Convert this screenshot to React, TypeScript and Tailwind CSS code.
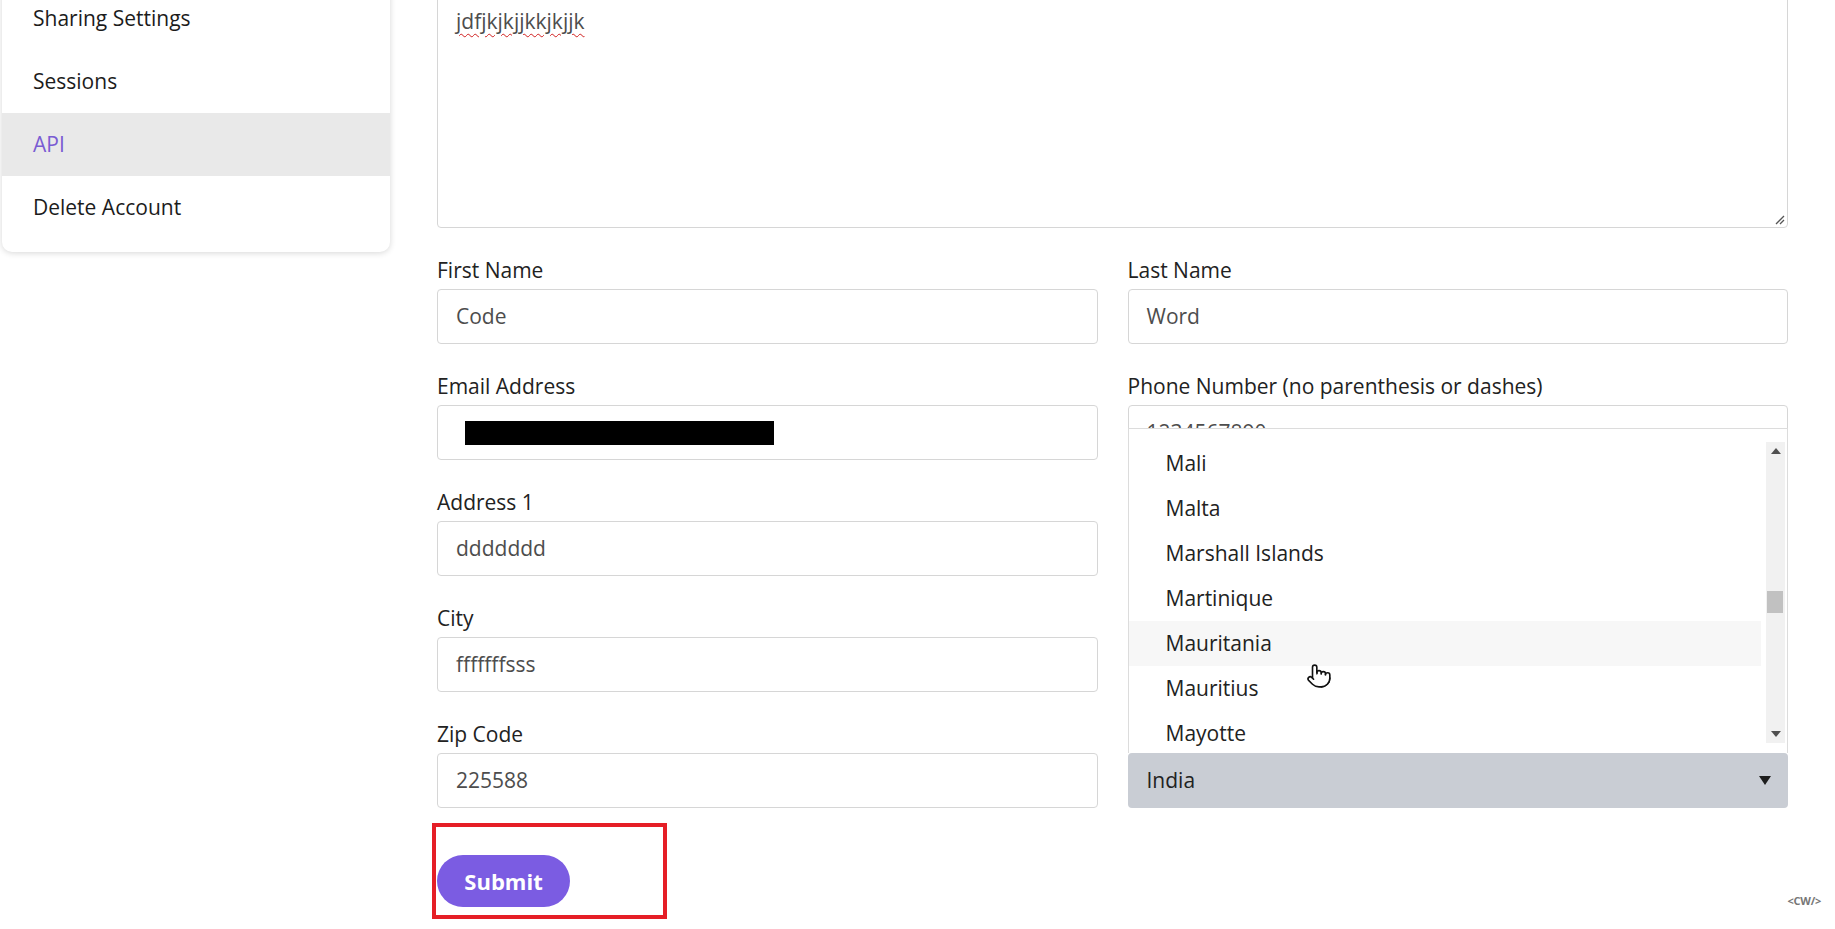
import React from 'react';
import { Pointer } from 'lucide-react';

const font = { fontFamily: '"Open Sans", Lato, sans-serif' };

const SideItem = ({ label, active }: { label: string; active?: boolean }) => (
  <div
    className={
      'h-[63px] flex items-center pl-[31px] text-[21px] ' +
      (active ? 'bg-[#e9e9e9] text-[#7a5cd3]' : 'text-[#1c1c1c]')
    }
  >
    {label}
  </div>
);

const Field = ({ label, children }: { label: string; children: React.ReactNode }) => (
  <div className="flex flex-col">
    <div className="h-[28px] leading-[28px] text-[21px] text-[#222] mb-[5px]">{label}</div>
    {children}
  </div>
);

const Input = ({ value, children }: { value?: string; children?: React.ReactNode }) => (
  <div className="h-[55px] border border-[#d6d6d6] rounded-[4px] bg-white flex items-center pl-[18px] text-[21px] text-[#4d4d4d] overflow-hidden">
    {value}
    {children}
  </div>
);

const countries = ['Mali', 'Malta', 'Marshall Islands', 'Martinique', 'Mauritania', 'Mauritius', 'Mayotte'];

export default function App() {
  return (
    <div className="w-[1835px] h-[929px] bg-white flex overflow-hidden relative" style={font}>
      {/* sidebar */}
      <div className="w-[388px] ml-[2px] shrink-0">
        <div className="-mt-[13px] bg-white rounded-b-[10px] shadow-[0_1px_6px_rgba(0,0,0,0.16)] pb-[13px]">
          <SideItem label="Sharing Settings" />
          <SideItem label="Sessions" />
          <SideItem label="API" active />
          <SideItem label="Delete Account" />
        </div>
      </div>

      {/* main */}
      <div className="ml-[47px] w-[1351px] flex flex-col">
        <div className="-mt-[12px] h-[240px] border border-[#d6d6d6] rounded-[4px] relative pt-[18px] pl-[18px]">
          <span className="text-[21px] leading-[28px] text-[#4d4d4d] underline decoration-wavy decoration-[#d02020] decoration-1 underline-offset-[4px]">
            jdfjkjkjjkkjkjjk
          </span>
          <svg className="absolute right-[2px] bottom-[2px]" width="12" height="12" viewBox="0 0 12 12">
            <path d="M11 3 L3 11 M11 7 L7 11" stroke="#555" strokeWidth="1.3" />
          </svg>
        </div>

        <div className="grid grid-cols-2 gap-x-[30px] gap-y-[28px] mt-[28px]">
          <Field label="First Name">
            <Input value="Code" />
          </Field>
          <Field label="Last Name">
            <Input value="Word" />
          </Field>
          <Field label="Email Address">
            <Input>
              <div className="ml-[9px] w-[309px] h-[24px] bg-black" />
            </Input>
          </Field>
          <Field label="Phone Number (no parenthesis or dashes)">
            <Input value="1234567890" />
          </Field>
          <Field label="Address 1">
            <Input value="ddddddd" />
          </Field>
          <div />
          <Field label="City">
            <Input value="fffffffsss" />
          </Field>
          <div />
          <Field label="Zip Code">
            <Input value="225588" />
          </Field>
          <div className="flex flex-col">
            <div className="h-[28px] mb-[5px]" />
            <div className="relative h-[55px]">
              {/* open list */}
              <div className="absolute left-0 right-0 bottom-full h-[325px] bg-white border border-[#dcdcdc] border-b-0 overflow-hidden pt-[12px]">
                {countries.map((c) => (
                  <div
                    key={c}
                    className={
                      'h-[45px] flex items-center pl-[37px] text-[21px] text-[#222] mr-[26px] ' +
                      (c === 'Mauritania' ? 'bg-[#f7f7f7]' : '')
                    }
                  >
                    {c}
                  </div>
                ))}
                <div className="absolute right-[2px] top-[13px] bottom-[10px] w-[19px] bg-[#f1f1f1] flex flex-col items-center justify-between py-[6px]">
                  <div className="w-0 h-0 border-l-[5px] border-r-[5px] border-b-[6px] border-l-transparent border-r-transparent border-b-[#505050]" />
                  <div className="w-0 h-0 border-l-[5px] border-r-[5px] border-t-[6px] border-l-transparent border-r-transparent border-t-[#505050]" />
                </div>
                <div className="absolute right-[4px] top-[162px] w-[16px] h-[22px] bg-[#c1c1c1]" />
              </div>
              <div className="h-[55px] bg-[#c9cdd4] rounded-[4px] flex items-center justify-between pl-[19px] pr-[17px] text-[21px] text-[#222]">
                India
                <div className="w-0 h-0 border-l-[6px] border-r-[6px] border-t-[9px] border-l-transparent border-r-transparent border-t-[#1e1e1e]" />
              </div>
            </div>
          </div>
        </div>

        <div className="mt-[15px] -ml-[5px] w-[235px] h-[96px] border-[4px] border-[#e51e26] pt-[28px] pl-[1px]">
          <button className="w-[133px] h-[52px] rounded-full bg-[#7b5ce2] text-white text-[22px] font-bold">
            Submit
          </button>
        </div>
      </div>

      {/* cursor */}
      <Pointer className="absolute left-[1306px] top-[663px]" size={26} fill="#fff" stroke="#111" strokeWidth={1.5} />

      {/* watermark */}
      <div className="absolute right-[14px] bottom-[20px] text-[11px] font-bold text-[#777] tracking-tight">
        &lt;CW/&gt;
      </div>
    </div>
  );
}
